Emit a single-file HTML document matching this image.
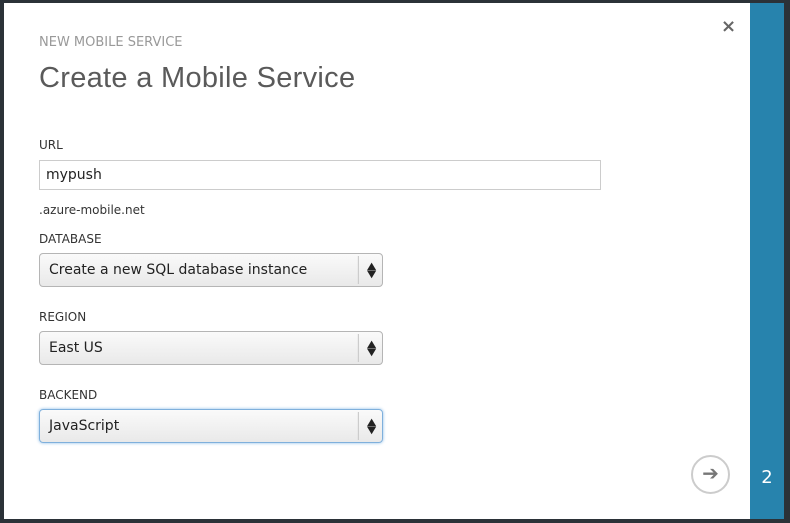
<!DOCTYPE html>
<html><head><style>
*{margin:0;padding:0;box-sizing:border-box}
body{width:790px;height:523px;background:#2b3238;position:relative;overflow:hidden;font-family:"Segoe UI","DejaVu Sans","Liberation Sans",sans-serif}
.panel{position:absolute;left:4px;top:3px;width:746px;height:516px;background:#fff}
.blue{position:absolute;left:750px;top:3px;width:34px;height:516px;background:#2783ad}
.num{position:absolute;left:750px;top:467px;width:34px;text-align:center;color:#fff;font-size:18px}
.t{position:absolute;left:39px;color:#222}
.sub{top:35px;font-size:13px;color:#999}
.h{top:62px;font-size:29px;font-weight:300;color:#5a5a5a;font-family:"Liberation Sans",sans-serif;letter-spacing:0.3px}
.lab{font-size:12px;color:#333}
.inp{position:absolute;left:39px;top:160px;width:562px;height:30px;border:1px solid #ccc;font-size:14px;padding:6px 6px;color:#222}
.sel{position:absolute;left:39px;width:344px;height:34px;border:1px solid #b5b5b5;border-radius:4px;background:linear-gradient(#fafafa,#e9e9e9);font-size:14px;padding:8px 9px;color:#222}
.sel .ar{position:absolute;right:0;top:2px;bottom:2px;width:22px;border-left:1px solid #ccc;font-size:10px;line-height:8px;text-align:center;padding-top:7px;color:#222;transform:scaleX(1.2);font-weight:bold}
.focus{border-color:#7fb0dc;box-shadow:0 0 3px #8cbbe6}
.x{position:absolute;left:721px;top:16px;font-size:18px;color:#666;font-weight:bold}
.go{position:absolute;left:691px;top:455px;width:39px;height:39px;border:2px solid #ccc;border-radius:50%;text-align:center;line-height:33px;font-size:20px;color:#777;font-weight:bold}
</style></head><body>
<div class="panel"></div>
<div class="blue"></div>
<div class="num">2</div>
<div class="x">×</div>
<div class="t sub">NEW MOBILE SERVICE</div>
<div class="t h">Create a Mobile Service</div>
<div class="t lab" style="top:138px">URL</div>
<div class="inp">mypush</div>
<div class="t" style="top:203px;font-size:12px;color:#333">.azure-mobile.net</div>
<div class="t lab" style="top:232px">DATABASE</div>
<div class="sel" style="top:253px">Create a new SQL database instance<div class="ar">▲<br>▼</div></div>
<div class="t lab" style="top:310px">REGION</div>
<div class="sel" style="top:331px">East US<div class="ar">▲<br>▼</div></div>
<div class="t lab" style="top:388px">BACKEND</div>
<div class="sel focus" style="top:409px">JavaScript<div class="ar">▲<br>▼</div></div>
<div class="go">➔</div>
</body></html>
